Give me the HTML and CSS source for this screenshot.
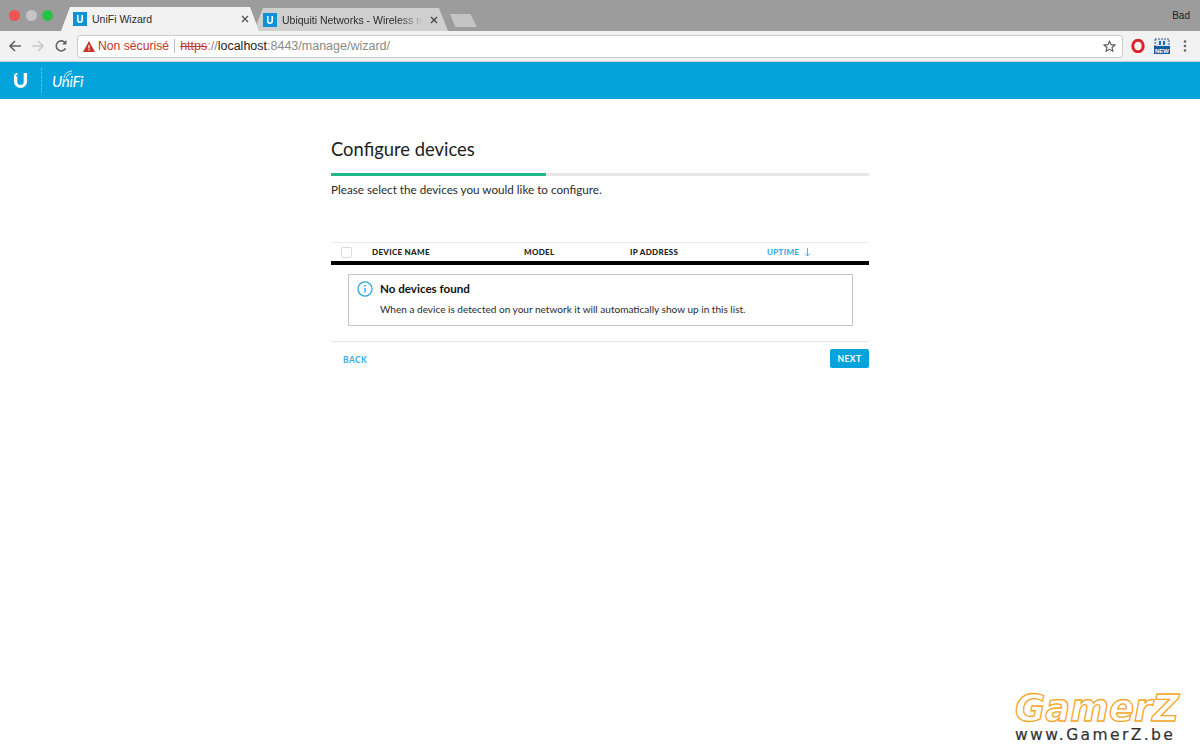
FILE: index.html
```html
<!DOCTYPE html>
<html lang="fr">
<head>
<meta charset="utf-8">
<title>UniFi Wizard</title>
<link rel="stylesheet" href="styles.css">
</head>
<body>
<div class="tabbar">
  <div class="lights"><i class="light red"></i><i class="light grey"></i><i class="light green"></i></div>
  <div class="tab tab-active">
    <svg class="favicon" viewBox="0 0 14 14"><rect width="14" height="14" fill="#0a94d6"/><path d="M4 3v5a3 3 0 0 0 6 0V3H8.400v5a1.400 1.400 0 0 1-2.800 0V3z" fill="#fff"/></svg>
    <span class="tab-title">UniFi Wizard</span>
    <svg class="tab-x" viewBox="0 0 8 8"><path d="M1 1l6 6M7 1L1 7" stroke="#555" stroke-width="1.300" fill="none"/></svg>
  </div>
  <div class="tab tab-back">
    <svg class="favicon" viewBox="0 0 14 14"><rect width="14" height="14" fill="#0a94d6"/><path d="M4 3v5a3 3 0 0 0 6 0V3H8.400v5a1.400 1.400 0 0 1-2.800 0V3z" fill="#fff"/></svg>
    <span class="tab-title fade">Ubiquiti Networks - Wireless n</span>
    <svg class="tab-x" viewBox="0 0 8 8"><path d="M1 1l6 6M7 1L1 7" stroke="#444" stroke-width="1.300" fill="none"/></svg>
  </div>
  <div class="tab-new"></div>
  <span class="profile">Bad</span>
</div>
<div class="toolbar">
  <svg class="nav" viewBox="0 0 14 14"><path d="M13 7H2M7 2L2 7l5 5" stroke="#5f6368" stroke-width="1.600" fill="none"/></svg>
  <svg class="nav" viewBox="0 0 14 14"><path d="M1 7h11M7 2l5 5-5 5" stroke="#c9c9c9" stroke-width="1.600" fill="none"/></svg>
  <svg class="nav" viewBox="0 0 14 14"><path d="M11.600 9.400A5 5 0 1 1 11 3.600" stroke="#5f6368" stroke-width="1.600" fill="none"/><path d="M12.500 1v4.500H8z" fill="#5f6368"/></svg>
  <div class="omnibox">
    <svg class="warn" viewBox="0 0 12 11"><path d="M6 0l6 11H0z" fill="#c5352c"/><path d="M5.400 4h1.200v3.600H5.400zM5.400 8.300h1.200v1.200H5.400z" fill="#fff"/></svg>
    <span class="insecure">Non sécurisé</span>
    <span class="sep"></span>
    <span class="url"><span class="scheme">https</span>://<span class="host">localhost</span>:8443/manage/wizard/</span>
    <svg class="star" viewBox="0 0 14 14"><path d="M7 1.300l1.700 3.700 4 .4-3 2.700.9 4L7 10l-3.600 2.100.9-4-3-2.700 4-.4z" stroke="#555" stroke-width="1.200" fill="none"/></svg>
  </div>
  <svg class="ext-opera" viewBox="0 0 14 14"><ellipse cx="7" cy="7" rx="5.200" ry="5.800" fill="none" stroke="#e0212b" stroke-width="3"/></svg>
  <svg class="ext-new" viewBox="0 0 16 16"><path d="M1 1h14v8H1z" fill="#dfe6ee" stroke="#3a5f88" stroke-dasharray="2 1"/><path d="M5 3h2v4H5zM9 3h2v4H9z" fill="#1b6fb5"/><rect y="8" width="16" height="8" fill="#125e9e"/><text x="8" y="14.600" class="ext-text" text-anchor="middle">NEW</text></svg>
  <svg class="menu" viewBox="0 0 4 14"><circle cx="2" cy="2.500" r="1.300" fill="#666"/><circle cx="2" cy="7" r="1.300" fill="#666"/><circle cx="2" cy="11.500" r="1.300" fill="#666"/></svg>
</div>
<header class="appbar">
  <svg class="u-logo" viewBox="0 0 16 18"><path d="M1 1v9a7 7 0 0 0 14 0V1h-3.600v9.200a3.400 3.400 0 0 1-6.800 0V1z" fill="#fff"/><path d="M1 1h1.600v1.600H1zM3 3.200h1.400v1.400H3z" fill="#05a3dc"/></svg>
  <span class="app-divider"></span>
  <span class="brand">UniFi
    <svg class="wifi" viewBox="0 0 12 10"><path d="M1 9c.5-4 3-7 9-8M3.600 9.200c.4-2.600 2-4.600 6-5.300" stroke="#fff" stroke-width="1" fill="none"/></svg>
  </span>
</header>
<main class="page">
  <h1 class="title">Configure devices</h1>
  <div class="progress"><div class="progress-fill"></div></div>
  <p class="lead">Please select the devices you would like to configure.</p>
  <div class="thead">
    <span class="col col-check"><span class="checkbox"></span></span>
    <span class="col col-name">DEVICE NAME</span>
    <span class="col col-model">MODEL</span>
    <span class="col col-ip">IP ADDRESS</span>
    <span class="col col-uptime">UPTIME
      <svg class="sort" viewBox="0 0 7 9"><path d="M3.500 0v8M1 5.500L3.500 8 6 5.500" stroke="#4db4e4" stroke-width="1" fill="none"/></svg>
    </span>
  </div>
  <div class="notice">
    <svg class="info" viewBox="0 0 18 18"><circle cx="9" cy="9" r="7.900" fill="none" stroke="#25a6e0" stroke-width="1.400"/><path d="M9 7.800v5" stroke="#25a6e0" stroke-width="1.500"/><circle cx="9" cy="5.300" r="1" fill="#25a6e0"/></svg>
    <div class="notice-body">
      <div class="notice-title">No devices found</div>
      <div class="notice-text">When a device is detected on your network it will automatically show up in this list.</div>
    </div>
  </div>
  <div class="actions">
    <a class="back">BACK</a>
    <a class="next">NEXT</a>
  </div>
</main>
<div class="watermark">
  <div class="wm-logo">GamerZ</div>
  <div class="wm-url">www.GamerZ.be</div>
</div>
</body>
</html>
```
FILE: styles.css
```css
* { box-sizing: border-box; }
html, body { margin: 0; height: 100%; }
body { width: 1200px; height: 750px; overflow: hidden; background: #fff; font-family: Lato, sans-serif; color: #1c1c1c; position: relative; }

.tabbar { height: 31px; background: #9c9c9c; display: flex; align-items: flex-end; padding-left: 9px; position: relative; }
.lights { display: flex; gap: 5.700px; align-self: flex-start; margin-top: 10px; width: 52px; }
.light { width: 11px; height: 11px; border-radius: 50%; display: block; flex: none; }
.red { background: #ee5450; }
.grey { background: #c4c4c4; }
.green { background: #27c246; }

.tab { height: 24px; display: flex; align-items: center; font-family: "Liberation Sans", sans-serif; font-size: 10.500px; color: #2b2b2b; clip-path: polygon(0 100%, 9px 0, calc(100% - 9px) 0, 100% 100%); }
.tab-active { width: 198px; background: #f2f2f2; padding: 0 7px 0 12px; position: relative; z-index: 1; }
.tab-back { width: 194px; background: #cfcfcf; padding: 0 7px 0 9px; margin-left: -5px; height: 23px; }
.favicon { width: 14px; height: 14px; flex: none; margin-right: 5px; }
.tab-title { flex: 1; white-space: nowrap; overflow: hidden; }
.fade { -webkit-mask-image: linear-gradient(to right, #000 82%, transparent 100%); mask-image: linear-gradient(to right, #000 82%, transparent 100%); }
.tab-x { width: 8px; height: 8px; flex: none; margin: 0 3px 0 6px; }
.tab-new { width: 27px; height: 13px; margin: 0 0 4px 2px; background: #c4c4c4; clip-path: polygon(0 0, 75% 0, 100% 100%, 20% 100%); }
.profile { margin-left: auto; align-self: flex-start; margin-top: 10px; margin-right: 10px; font-family: "Liberation Sans", sans-serif; font-size: 10px; color: #222; }

.toolbar { height: 31px; background: #f2f2f2; border-bottom: 1px solid #d0d0d0; display: flex; align-items: center; padding-left: 8px; }
.nav { width: 14px; height: 14px; flex: none; margin-right: 9px; }
.omnibox { width: 1046px; height: 23px; background: #fff; border: 1px solid #cdcdcd; border-radius: 3px; display: flex; align-items: center; padding: 0 6px 0 5px; font-family: "Liberation Sans", sans-serif; font-size: 12.200px; flex: none; }
.warn { width: 12px; height: 11px; flex: none; margin-right: 3px; }
.insecure { color: #c5352c; white-space: nowrap; }
.sep { width: 1px; height: 14px; background: #bdbdbd; margin: 0 5px; flex: none; }
.url { color: #8a8a8a; white-space: nowrap; flex: 1; font-size: 12.500px; }
.scheme { color: #c5352c; text-decoration: line-through; }
.host { color: #222; }
.star { width: 13px; height: 13px; flex: none; }
.ext-opera { width: 14px; height: 14px; flex: none; margin-left: 8px; }
.ext-new { width: 16px; height: 16px; flex: none; margin-left: 9px; }
.ext-text { font-family: "Liberation Sans", sans-serif; font-size: 6px; font-weight: 700; fill: #fff; }
.menu { width: 4px; height: 14px; flex: none; margin-left: 13px; }

.appbar { height: 37px; background: #05a3dc; display: flex; align-items: center; padding-left: 13px; }
.u-logo { width: 15px; height: 17px; flex: none; }
.app-divider { width: 0; height: 25px; border-left: 1px dotted #7fcdec; margin: 0 10px 0 13px; }
.brand { font-family: "Lato", sans-serif; font-style: italic; font-size: 15px; color: #fff; position: relative; letter-spacing: -.3px; }
.wifi { width: 11px; height: 9px; position: absolute; left: 11px; top: -2px; }

.page { width: 538px; margin: 0 auto; padding-top: 38px; }
.title { margin: 0; font-size: 18.400px; line-height: 24px; font-weight: 400; color: #1c1c1c; }
.progress { height: 3px; background: #e6e6e6; margin-top: 12px; }
.progress-fill { width: 40%; height: 100%; background: #1fb886; }
.lead { margin: 5px 0 0; font-size: 11.700px; line-height: 16px; color: #2a2a2a; }
.thead { height: 23px; margin-top: 45px; border-top: 1px solid #ebebeb; border-bottom: 4px solid #000; display: flex; align-items: center; font-size: 8px; font-weight: 900; letter-spacing: .3px; color: #222; }
.col { display: flex; align-items: center; flex: none; }
.col-check { width: 41px; padding-left: 10px; }
.col-name { width: 152px; }
.col-model { width: 106px; }
.col-ip { width: 137px; }
.col-uptime { color: #34ace2; gap: 5px; }
.checkbox { width: 11px; height: 11px; border: 1px solid #dcdcdc; border-radius: 2px; display: block; }
.sort { width: 7px; height: 9px; }

.notice { width: 505px; height: 52px; margin: 9px 0 0 17px; border: 1px solid #c4c4c4; display: flex; padding: 5px 0 0 8px; }
.info { width: 16px; height: 16px; flex: none; margin: 1px 7px 0 0; }
.notice-body { display: flex; flex-direction: column; }
.notice-title { font-size: 11.600px; font-weight: 700; line-height: 18px; color: #111; }
.notice-text { font-size: 10.050px; line-height: 12px; margin-top: 5px; color: #2a2a2a; white-space: nowrap; }

.actions { margin-top: 15px; border-top: 1px solid #e6e6e6; padding-top: 7px; display: flex; justify-content: space-between; align-items: center; }
.back { margin: 2px 0 0 12px; font-size: 8.500px; font-weight: 700; letter-spacing: .4px; color: #34ace2; }
.next { width: 39px; height: 19px; background: #05a3dc; border-radius: 2px; color: #fff; font-size: 8.500px; font-weight: 700; letter-spacing: .4px; display: flex; align-items: center; justify-content: center; }

.watermark { position: absolute; left: 1015px; top: 691px; width: 185px; }
.wm-logo { font-family: "DejaVu Sans", sans-serif; font-style: italic; font-weight: 700; font-size: 37px; line-height: 36px; color: #fff; -webkit-text-stroke: 1.300px #f4a62a; }
.wm-url { font-family: "DejaVu Sans", sans-serif; font-size: 15.500px; line-height: 16px; letter-spacing: 2.400px; color: #333; -webkit-text-stroke: .2px #333; white-space: nowrap; }
```
